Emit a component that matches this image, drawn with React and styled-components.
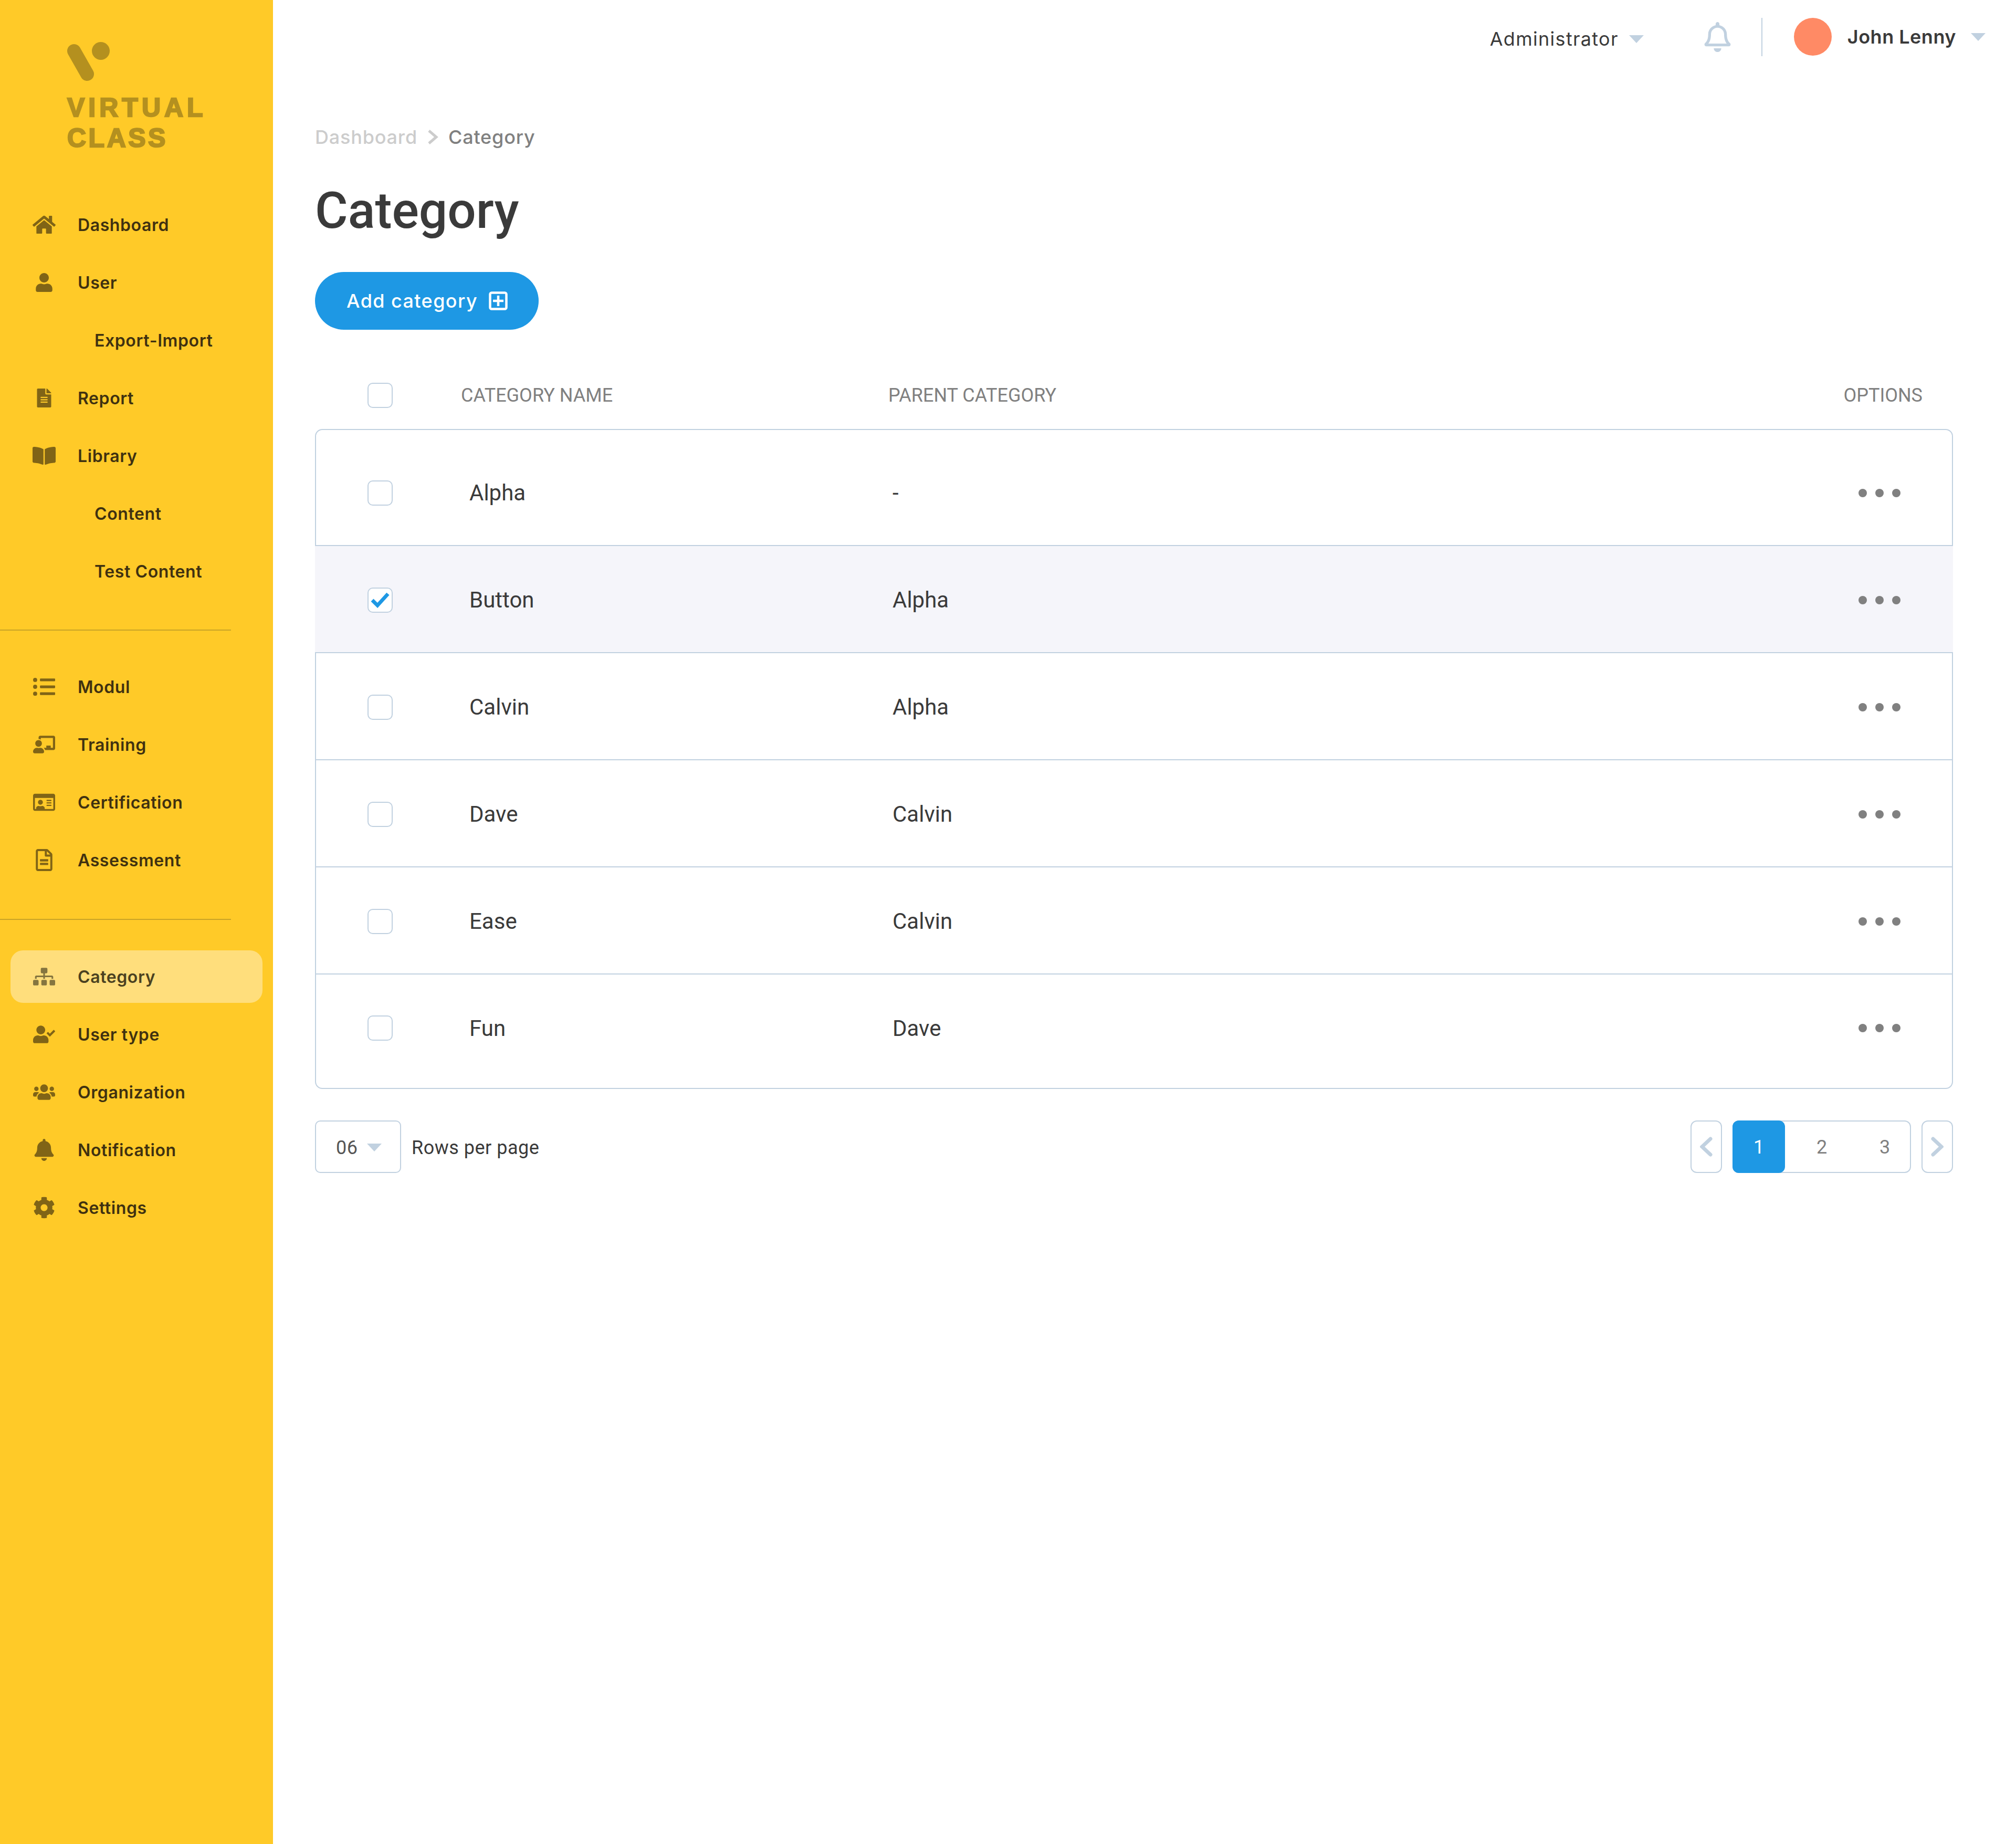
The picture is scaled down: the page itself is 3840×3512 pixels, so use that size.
import React from 'react';
import styled, { createGlobalStyle } from 'styled-components';
import {
  FaHome, FaUser, FaFileAlt, FaBookOpen, FaListUl, FaChalkboardTeacher, FaRegIdCard,
  FaRegFileAlt, FaSitemap, FaUserCheck, FaUsers, FaBell, FaCog, FaRegBell,
} from 'react-icons/fa';

const Global = createGlobalStyle`
  html, body { margin: 0; padding: 0; background: #fff; }
  * { box-sizing: border-box; }
`;

const UI = `Inter, "Open Sans", sans-serif`;
const TABLE = `Roboto, "Liberation Sans", sans-serif`;
const LINE = '#c1d1e0';

const Page = styled.div`
  display: flex;
  width: 3840px;
  min-height: 3512px;
  background: #fff;
`;
const Sidebar = styled.aside`
  width: 520px;
  flex: none;
  background: #ffca28;
`;
const Logo = styled.div`
  padding: 80px 0 0 128px;
  color: #b4901f;
  font-family: "Liberation Sans", Arial, sans-serif;
  font-weight: 700;
  font-size: 50px;
  line-height: 58px;
  -webkit-text-stroke: 2.5px #b4901f;
  svg { display: block; margin-bottom: 21px; }
`;
const LogoLine = styled.div`
  letter-spacing: ${p => p.$ls}px;
`;
const Nav = styled.nav`
  margin-top: 86px;
  display: flex;
  flex-direction: column;
`;
const Group = styled.div`
  display: flex;
  flex-direction: column;
  gap: 10px;
`;
const Divider = styled.div`
  width: 440px;
  height: 2px;
  background: #c9a326;
  margin: ${p => p.$top}px 0 ${p => p.$bottom}px;
`;
const Item = styled.a`
  display: flex;
  align-items: center;
  height: 100px;
  margin: 0 20px;
  padding-left: ${p => (p.$sub ? 160 : 42)}px;
  border-radius: 24px;
  background: ${p => (p.$active ? '#ffde7c' : 'transparent')};
  color: ${p => (p.$active ? '#4b4120' : '#3f3110')};
  font-family: ${UI};
  font-weight: 600;
  font-size: 32px;
  letter-spacing: 0.6px;
`;
const IconSlot = styled.span`
  width: 44px;
  margin-right: 42px;
  display: flex;
  justify-content: center;
  color: ${p => (p.$active ? '#85753f' : '#806416')};
  flex: none;
`;
const Main = styled.main`
  flex: 1;
  min-width: 0;
`;
const TopBar = styled.header`
  height: 140px;
  display: flex;
  align-items: center;
  justify-content: flex-end;
  padding-right: 58px;
`;
const Caret = styled.span`
  width: 0;
  height: 0;
  border-left: 14px solid transparent;
  border-right: 14px solid transparent;
  border-top: 15px solid ${LINE};
  display: block;
  margin-left: ${p => p.$ml || 0}px;
`;
const RoleMenu = styled.div`
  display: flex;
  align-items: center;
  padding-top: 8px;
  font-family: ${UI};
  font-size: 36px;
  letter-spacing: 1.3px;
  color: #3a3a3a;
`;
const BellBox = styled.span`
  display: flex;
  color: ${LINE};
  margin-left: 112px;
`;
const VLine = styled.span`
  width: 2px;
  height: 73px;
  background: ${LINE};
  margin: 0 60px 0 55px;
`;
const Avatar = styled.span`
  width: 72px;
  height: 72px;
  border-radius: 50%;
  background: #ff8a65;
  margin-right: 30px;
`;
const UserName = styled.span`
  font-family: ${UI};
  font-weight: 600;
  font-size: 36px;
  letter-spacing: 0.5px;
  color: #3a3a3a;
`;
const Content = styled.div`
  padding: 0 120px 0 80px;
`;
const Crumbs = styled.div`
  margin-top: 99px;
  height: 44px;
  display: flex;
  align-items: center;
  font-family: ${UI};
  font-weight: 500;
  font-size: 36px;
  letter-spacing: 0.8px;
`;
const Crumb = styled.span`
  color: ${p => (p.$current ? '#808080' : '#cccccc')};
`;
const Title = styled.h1`
  margin: 62px 0 0;
  font-family: ${TABLE};
  font-weight: 500;
  font-size: 96px;
  line-height: 112px;
  color: #3a3a3a;
`;
const AddButton = styled.button`
  margin-top: 61px;
  width: 426px;
  height: 110px;
  border: 0;
  border-radius: 55px;
  background: #1e98e4;
  color: #fff;
  display: flex;
  align-items: center;
  padding-left: 60px;
  font-family: ${UI};
  font-weight: 500;
  font-size: 36px;
  letter-spacing: 1.4px;
  gap: 21px;
`;
const Check = styled.span`
  width: 48px;
  height: 48px;
  border: 2px solid ${LINE};
  border-radius: 10px;
  background: #fff;
  display: flex;
  align-items: center;
  justify-content: center;
`;
const HeadRow = styled.div`
  margin: 101px 0 40px;
  height: 48px;
  display: grid;
  grid-template-columns: 178px 814px 1fr auto;
  align-items: center;
  padding: 0 58px 0 100px;
  font-family: ${TABLE};
  font-size: 36px;
  color: #808080;
`;
const Table = styled.div`
  border: 2px solid ${LINE};
  border-radius: 14px;
`;
const Row = styled.div`
  display: grid;
  grid-template-columns: 194px 806px 1fr auto;
  align-items: center;
  height: ${p => p.$h}px;
  padding: ${p => p.$pt}px 98px ${p => p.$pb}px;
  font-family: ${TABLE};
  font-size: 42px;
  color: #3a3a3a;
  border-bottom: ${p => (p.$last ? 0 : `2px solid ${LINE}`)};
  ${p => p.$selected && `
    background: #f5f5fa;
    margin: 0 -2px;
    padding-left: 100px;
    padding-right: 100px;
  `}
`;
const Dots = styled.span`
  display: flex;
  gap: 16px;
  i {
    width: 16px;
    height: 16px;
    border-radius: 50%;
    background: #808080;
    display: block;
  }
`;
const Footer = styled.div`
  margin-top: 60px;
  display: flex;
  align-items: center;
  justify-content: space-between;
`;
const Rows = styled.div`
  display: flex;
  align-items: center;
  font-family: ${TABLE};
  font-size: 36px;
  letter-spacing: 0.5px;
  color: #3a3a3a;
`;
const RowsLabel = styled.span`
  padding-top: 3px;
`;
const Select = styled.div`
  width: 164px;
  height: 100px;
  border: 2px solid ${LINE};
  border-radius: 10px;
  display: flex;
  align-items: center;
  padding: 3px 0 0 38px;
  margin-right: 20px;
  color: #555;
`;
const Pager = styled.div`
  display: flex;
  gap: 20px;
`;
const PageArrow = styled.span`
  width: 60px;
  height: 100px;
  border: 2px solid ${LINE};
  border-radius: 12px;
  display: flex;
  align-items: center;
  justify-content: center;
`;
const PageGroup = styled.div`
  width: 340px;
  height: 100px;
  border: 2px solid ${LINE};
  border-radius: 12px;
  display: flex;
  align-items: center;
  font-family: ${TABLE};
  font-size: 36px;
  color: #808080;
`;
const PageNo = styled.span`
  height: 100px;
  width: ${p => p.$w}px;
  flex: none;
  display: flex;
  align-items: center;
  justify-content: center;
  padding-top: 2px;
  border-radius: 12px;
  ${p => p.$active && `
    background: #1e98e4;
    color: #fff;
    margin-left: -2px;
  `}
`;

const sections = [
  [
    { t: 'Dashboard', I: FaHome, s: 44 },
    { t: 'User', I: FaUser, s: 36 },
    { t: 'Export-Import', sub: true },
    { t: 'Report', I: FaFileAlt, s: 36 },
    { t: 'Library', I: FaBookOpen, s: 44 },
    { t: 'Content', sub: true },
    { t: 'Test Content', sub: true },
  ],
  [
    { t: 'Modul', I: FaListUl, s: 42 },
    { t: 'Training', I: FaChalkboardTeacher, s: 42 },
    { t: 'Certification', I: FaRegIdCard, s: 42 },
    { t: 'Assessment', I: FaRegFileAlt, s: 42 },
  ],
  [
    { t: 'Category', I: FaSitemap, s: 42, active: true },
    { t: 'User type', I: FaUserCheck, s: 42 },
    { t: 'Organization', I: FaUsers, s: 42 },
    { t: 'Notification', I: FaBell, s: 42 },
    { t: 'Settings', I: FaCog, s: 42 },
  ],
];

const data = [
  ['Alpha', '-'], ['Button', 'Alpha'], ['Calvin', 'Alpha'],
  ['Dave', 'Calvin'], ['Ease', 'Calvin'], ['Fun', 'Dave'],
];

function NavGroup({ items }) {
  return (
    <Group>
      {items.map(({ t, I, s, sub, active }) => (
        <Item key={t} $sub={sub} $active={active}>
          {I && <IconSlot $active={active}><I size={s} /></IconSlot>}
          {t}
        </Item>
      ))}
    </Group>
  );
}

const Chevron = ({ dir }) => (
  <svg width="24" height="38" viewBox="0 0 24 38" fill="none" stroke={LINE} strokeWidth="7" strokeLinecap="round">
    <path d={dir === 'left' ? 'M20 4 L4 19 L20 34' : 'M4 4 L20 19 L4 34'} />
  </svg>
);

export default function App() {
  return (
    <Page>
      <Global />
      <Sidebar>
        <Logo>
          <svg width="81" height="75" viewBox="0 0 81 75">
            <line x1="13" y1="17" x2="38" y2="61" stroke="#b4901f" strokeWidth="26" strokeLinecap="round" />
            <circle cx="64" cy="17" r="17" fill="#b4901f" />
          </svg>
          <LogoLine $ls={7}>VIRTUAL</LogoLine>
          <LogoLine $ls={4.5}>CLASS</LogoLine>
        </Logo>
        <Nav>
          <NavGroup items={sections[0]} />
          <Divider $top={61} $bottom={57} />
          <NavGroup items={sections[1]} />
          <Divider $top={62} $bottom={58} />
          <NavGroup items={sections[2]} />
        </Nav>
      </Sidebar>
      <Main>
        <TopBar>
          <RoleMenu>Administrator<Caret $ml={20} /></RoleMenu>
          <BellBox><FaRegBell size={57} /></BellBox>
          <VLine />
          <Avatar />
          <UserName>John Lenny</UserName>
          <Caret $ml={28} />
        </TopBar>
        <Content>
          <Crumbs>
            <Crumb>Dashboard</Crumb>
            <svg width="59" height="32" viewBox="0 0 59 32" fill="none" stroke="#cccccc" strokeWidth="5">
              <path d="M22 4 L36 16 L22 28" />
            </svg>
            <Crumb $current>Category</Crumb>
          </Crumbs>
          <Title>Category</Title>
          <AddButton>
            Add category
            <svg width="36" height="36" viewBox="0 0 36 36" fill="none" stroke="#fff" strokeWidth="4.5">
              <rect x="2.5" y="2.5" width="31" height="31" rx="3" />
              <path d="M18 8 V28 M8 18 H28" />
            </svg>
          </AddButton>
          <HeadRow>
            <Check />
            <span>CATEGORY NAME</span>
            <span>PARENT CATEGORY</span>
            <span>OPTIONS</span>
          </HeadRow>
          <Table>
            {data.map(([name, parent], i) => (
              <Row
                key={name}
                $h={i === 0 ? 221 : i === 5 ? 216 : 204}
                $pt={i === 0 ? 20 : i === 5 ? 0 : 3}
                $pb={i === 5 ? 12 : 0}
                $last={i === 5}
                $selected={i === 1}
              >
                <Check>
                  {i === 1 && (
                    <svg width="36" height="30" viewBox="0 0 36 30" fill="none" stroke="#1e98e4" strokeWidth="7">
                      <path d="M3 15 L13 25 L33 3" />
                    </svg>
                  )}
                </Check>
                <span>{name}</span>
                <span>{parent}</span>
                <Dots><i /><i /><i /></Dots>
              </Row>
            ))}
          </Table>
          <Footer>
            <Rows>
              <Select>06<Caret $ml={18} /></Select>
              <RowsLabel>Rows per page</RowsLabel>
            </Rows>
            <Pager>
              <PageArrow><Chevron dir="left" /></PageArrow>
              <PageGroup>
                <PageNo $w={100} $active>1</PageNo>
                <PageNo $w={140}>2</PageNo>
                <PageNo $w={100}>3</PageNo>
              </PageGroup>
              <PageArrow><Chevron dir="right" /></PageArrow>
            </Pager>
          </Footer>
        </Content>
      </Main>
    </Page>
  );
}
